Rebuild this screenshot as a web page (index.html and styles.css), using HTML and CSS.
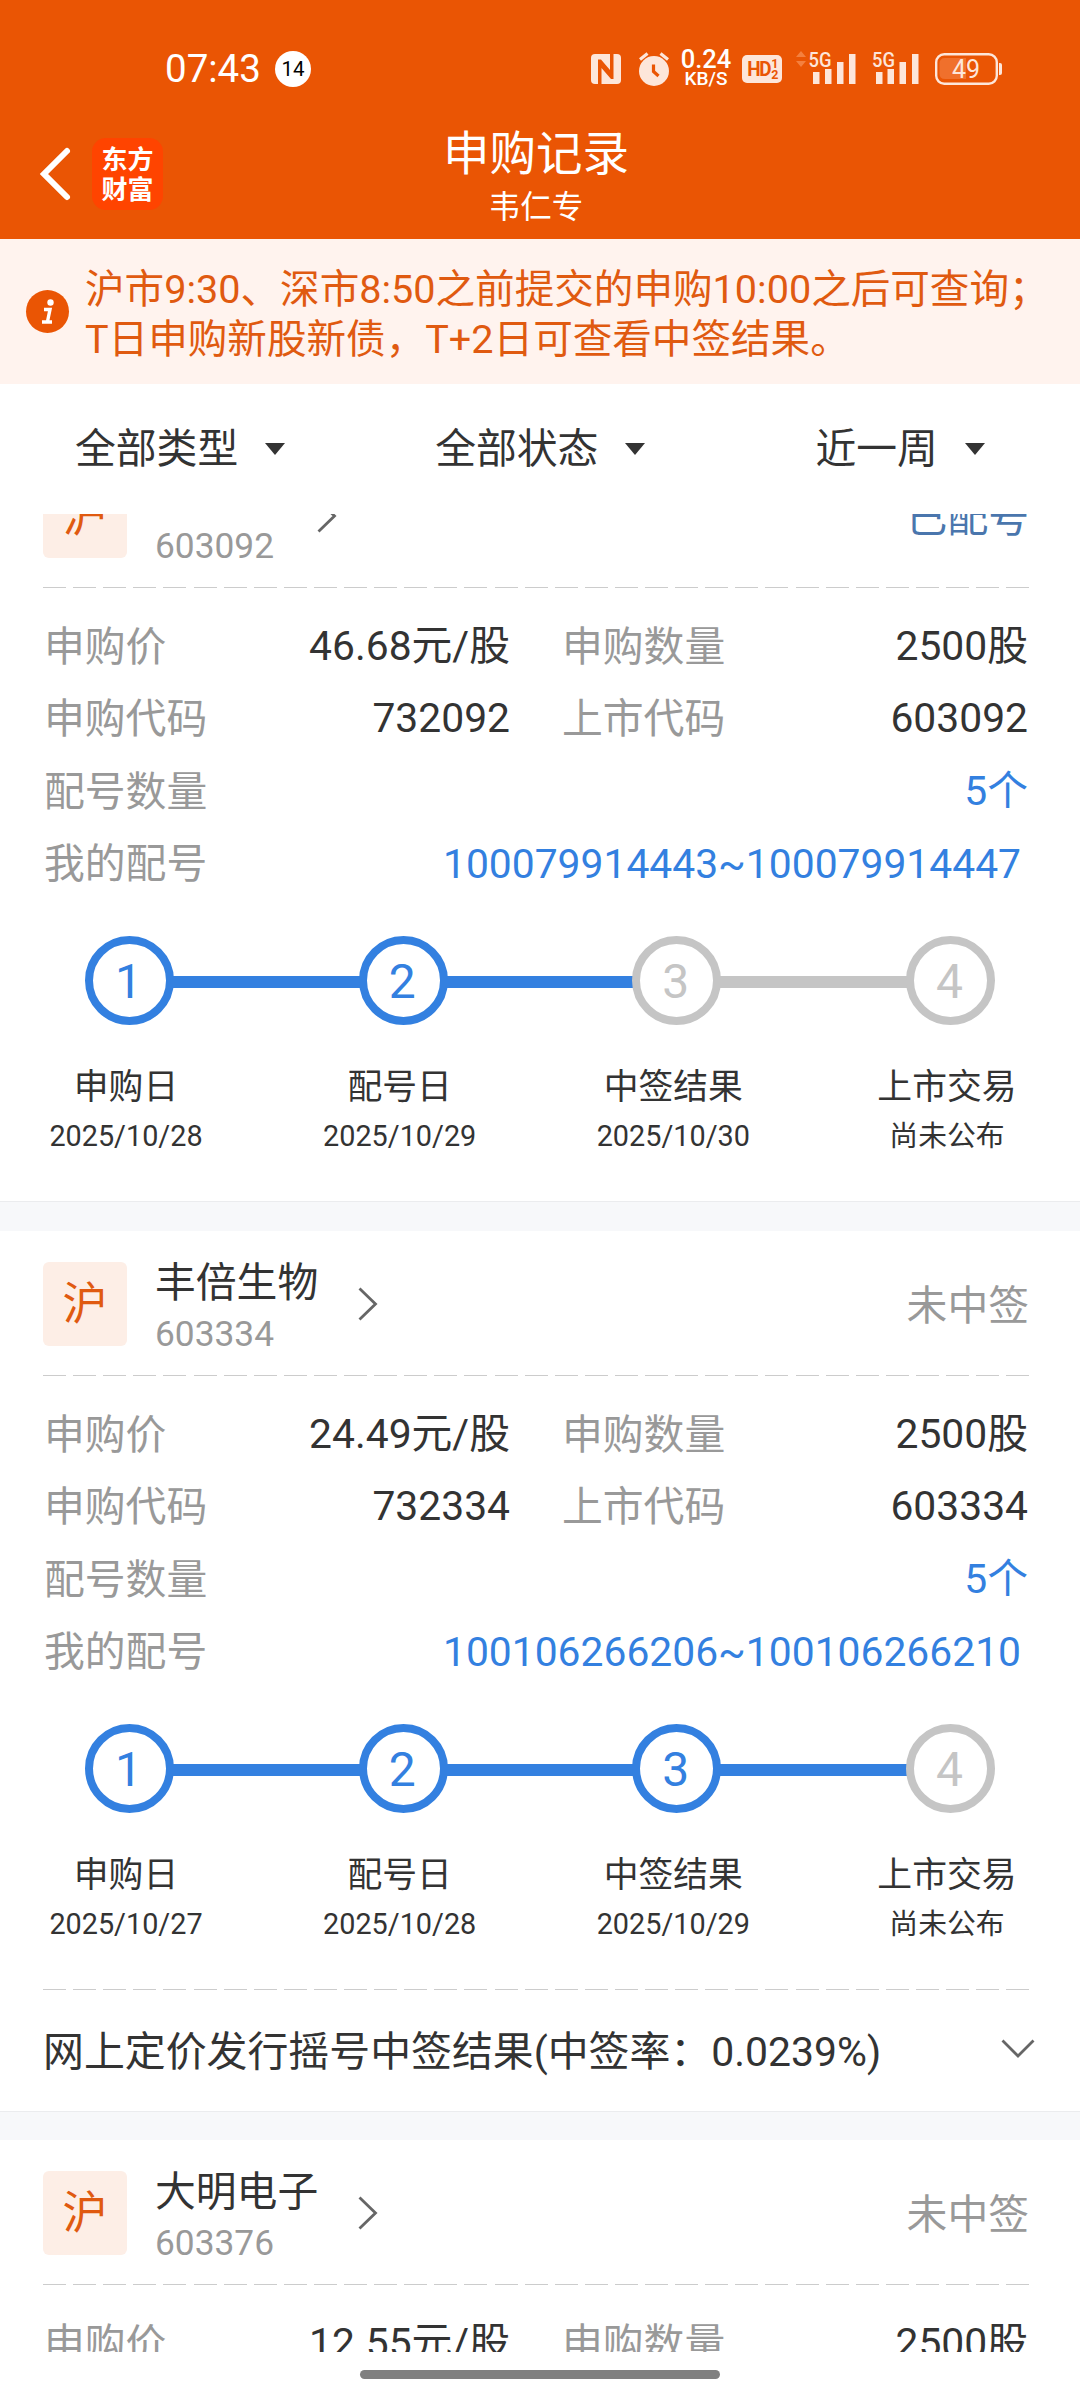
FILE: index.html
```html
<!DOCTYPE html>
<html lang="zh-CN">

<head>
    <meta charset="UTF-8">
    <meta name="viewport" content="width=device-width, initial-scale=1.0">
    <title>申购记录</title>
    <link rel="stylesheet" href="styles.css">
</head>

<body>
    <header class="header">
        <div class="status-bar">
            <span class="time">07:43</span>
            <span class="notice-count">14</span>
            <div class="status-icons">
                <svg class="icon-nfc" width="30" height="30" viewBox="0 0 30 30">
                    <rect width="30" height="30" rx="4" fill="#fde6da" />
                    <path d="M7 30V5.500H10L19 16V0H22.500V25H20L10.500 14V30Z" fill="#ea5504" />
                </svg>
                <svg class="icon-alarm" width="32" height="34" viewBox="0 0 32 34">
                    <circle cx="16" cy="19" r="15" fill="#fde6da" />
                    <path d="M2 7.500L9.500 1.500M30 7.500L22.500 1.500" stroke="#fde6da" stroke-width="3.200" />
                    <path d="M15.500 12.500V19.500L20.500 24" fill="none" stroke="#ea5504" stroke-width="3.200" />
                </svg>
                <div class="net-speed">
                    <span class="speed-value">0.24</span>
                    <span class="speed-unit">KB/S</span>
                </div>
                <div class="hd">
                    <span class="hd-text">HD</span>
                    <span class="hd-sim"><span>1</span><span>2</span></span>
                </div>
                <svg class="icon-signal-a" width="60" height="34" viewBox="0 0 60 34">
                    <path d="M0 7L5 1L10 7ZM0 11H10L5 17Z" fill="#f4803f" />
                    <text x="12.500" y="17" textLength="23" lengthAdjust="spacingAndGlyphs" class="net-type">5G</text>
                    <path d="M17 22h6.500v12H17zM29 19h6.500v15H29zM41 12h6.500v22H41zM53 4h6.500v30H53z" fill="#fde6da" />
                </svg>
                <svg class="icon-signal-b" width="47" height="34" viewBox="0 0 47 34">
                    <text x="0" y="17" textLength="23" lengthAdjust="spacingAndGlyphs" class="net-type">5G</text>
                    <path d="M4 22h6.500v12H4zM15.500 19H22v15h-6.500zM27.500 12H34v22h-6.500zM40 4h6.500v30H40z" fill="#fde6da" />
                </svg>
                <svg class="icon-battery" width="67" height="32" viewBox="0 0 67 32">
                    <rect x="1.200" y="1.200" width="60.600" height="29.600" rx="8" fill="none" stroke="#fde6da" stroke-width="2.400" />
                    <path d="M10 5H31V26H10Q4.500 26 4.500 20.500V10.500Q4.500 5 10 5Z" fill="#f0702c" />
                    <path d="M64 10h1q2 0 2 2v8q0 2-2 2h-1z" fill="#fde6da" />
                    <text x="31" y="25" text-anchor="middle" class="battery-level">49</text>
                </svg>
            </div>
        </div>
        <nav class="nav">
            <div class="nav-left">
                <svg width="30" height="54" viewBox="0 0 30 54">
                    <path d="M27 4L4 27L27 50" fill="none" stroke="#fff" stroke-width="6" stroke-linecap="round" />
                </svg>
                <div class="logo">东方<br>财富</div>
            </div>
            <div class="nav-title">
                <h1>申购记录</h1>
                <p>韦仁专</p>
            </div>
        </nav>
    </header>

    <div class="notice">
        <svg width="43" height="43" viewBox="0 0 43 43">
            <circle cx="21.500" cy="21.500" r="21.500" fill="#ea5504" />
            <circle cx="24.500" cy="12.500" r="3.200" fill="#fff" />
            <path d="M18 19.500H24L21.500 31.500M16 32H26" fill="none" stroke="#fff" stroke-width="3.400" />
        </svg>
        <p>沪市9:30、深市8:50之前提交的申购10:00之后可查询；<br>T日申购新股新债，T+2日可查看中签结果。</p>
    </div>

    <div class="filters">
        <div class="filter">全部类型<i class="caret"></i></div>
        <div class="filter">全部状态<i class="caret"></i></div>
        <div class="filter filter-last">近一周<i class="caret"></i></div>
    </div>

    <main class="list">
        <!-- first card is scrolled partly under the filters -->
        <section class="card card-scrolled">
            <div class="card-head">
                <span class="market">沪</span>
                <div class="stock">
                    <h2>德力佳</h2>
                    <span class="code">603092</span>
                </div>
                <svg class="arrow" width="20" height="34" viewBox="0 0 20 34">
                    <path d="M1.500 1.500L17.500 17L1.500 32.500" fill="none" stroke="#666" stroke-width="2.800" />
                </svg>
                <span class="state state-blue">已配号</span>
            </div>
            <div class="dash"></div>
            <div class="card-body">
                <div class="row">
                    <div class="cell"><label>申购价</label><span>46.68元/股</span></div>
                    <div class="cell"><label>申购数量</label><span>2500股</span></div>
                </div>
                <div class="row">
                    <div class="cell"><label>申购代码</label><span>732092</span></div>
                    <div class="cell"><label>上市代码</label><span>603092</span></div>
                </div>
                <div class="row blue"><label>配号数量</label><span>5个</span></div>
                <div class="row blue"><label>我的配号</label><span class="numbers">100079914443~100079914447</span></div>
                <div class="steps">
                    <span class="dot done">1</span><i class="line done"></i>
                    <span class="dot done">2</span><i class="line done"></i>
                    <span class="dot">3</span><i class="line"></i>
                    <span class="dot">4</span>
                </div>
                <div class="step-labels">
                    <div><b>申购日</b><span>2025/10/28</span></div>
                    <div><b>配号日</b><span>2025/10/29</span></div>
                    <div><b>中签结果</b><span>2025/10/30</span></div>
                    <div><b>上市交易</b><span>尚未公布</span></div>
                </div>
            </div>
        </section>

        <div class="divider"></div>

        <section class="card">
            <div class="card-head">
                <span class="market">沪</span>
                <div class="stock">
                    <h2>丰倍生物</h2>
                    <span class="code">603334</span>
                </div>
                <svg class="arrow" width="20" height="34" viewBox="0 0 20 34">
                    <path d="M1.500 1.500L17.500 17L1.500 32.500" fill="none" stroke="#666" stroke-width="2.800" />
                </svg>
                <span class="state">未中签</span>
            </div>
            <div class="dash"></div>
            <div class="card-body">
                <div class="row">
                    <div class="cell"><label>申购价</label><span>24.49元/股</span></div>
                    <div class="cell"><label>申购数量</label><span>2500股</span></div>
                </div>
                <div class="row">
                    <div class="cell"><label>申购代码</label><span>732334</span></div>
                    <div class="cell"><label>上市代码</label><span>603334</span></div>
                </div>
                <div class="row blue"><label>配号数量</label><span>5个</span></div>
                <div class="row blue"><label>我的配号</label><span class="numbers">100106266206~100106266210</span></div>
                <div class="steps">
                    <span class="dot done">1</span><i class="line done"></i>
                    <span class="dot done">2</span><i class="line done"></i>
                    <span class="dot done">3</span><i class="line done"></i>
                    <span class="dot">4</span>
                </div>
                <div class="step-labels">
                    <div><b>申购日</b><span>2025/10/27</span></div>
                    <div><b>配号日</b><span>2025/10/28</span></div>
                    <div><b>中签结果</b><span>2025/10/29</span></div>
                    <div><b>上市交易</b><span>尚未公布</span></div>
                </div>
            </div>
            <div class="dash"></div>
            <div class="result">
                <span>网上定价发行摇号中签结果(中签率：0.0239%)</span>
                <svg width="34" height="20" viewBox="0 0 34 20">
                    <path d="M1.500 1.500L17 17L32.500 1.500" fill="none" stroke="#666" stroke-width="2.800" />
                </svg>
            </div>
        </section>

        <div class="divider"></div>

        <section class="card">
            <div class="card-head">
                <span class="market">沪</span>
                <div class="stock">
                    <h2>大明电子</h2>
                    <span class="code">603376</span>
                </div>
                <svg class="arrow" width="20" height="34" viewBox="0 0 20 34">
                    <path d="M1.500 1.500L17.500 17L1.500 32.500" fill="none" stroke="#666" stroke-width="2.800" />
                </svg>
                <span class="state">未中签</span>
            </div>
            <div class="dash"></div>
            <div class="card-body">
                <div class="row">
                    <div class="cell"><label>申购价</label><span>12.55元/股</span></div>
                    <div class="cell"><label>申购数量</label><span>2500股</span></div>
                </div>
            </div>
        </section>
    </main>

    <footer class="home-bar"></footer>
</body>

</html>
```
FILE: styles.css
```css
* {
    box-sizing: border-box;
    margin: 0;
    padding: 0;
}

body {
    width: 1080px;
    height: 2400px;
    overflow: hidden;
    background-color: #fff;
    color: #333;
    font-family: Roboto, "Noto Sans CJK SC", sans-serif;
    font-size: 40.8px;
    font-weight: 400;
}

svg {
    display: block;
    flex: none;
    overflow: visible;
}

h1,
h2,
b {
    font-weight: 400;
}

/* Header */
.header {
    height: 239px;
    background-color: #ea5504;
    color: #fff;
}

.status-bar {
    display: flex;
    align-items: center;
    height: 88px;
    padding: 50px 78px 0 165px;
}

.time {
    width: 110px;
    font-size: 38.5px;
    line-height: 38px;
}

.notice-count {
    width: 36px;
    height: 36px;
    border-radius: 50%;
    background-color: #fff;
    color: #000;
    font-size: 20.5px;
    line-height: 36px;
    text-align: center;
}

.status-icons {
    display: flex;
    align-items: center;
    margin-left: auto;
}

.icon-alarm {
    margin-left: 17px;
}

.net-speed {
    display: flex;
    flex-direction: column;
    align-items: center;
    width: 52px;
    height: 40px;
    margin-left: 10px;
    font-weight: 500;
}

.speed-value {
    font-size: 25.5px;
    line-height: 20px;
}

.speed-unit {
    font-size: 19px;
    line-height: 20px;
}

.hd {
    display: flex;
    align-items: center;
    justify-content: center;
    width: 40px;
    height: 28px;
    margin-left: 10px;
    border-radius: 5px;
    background-color: #fde6da;
    color: #ea5504;
    font-weight: 700;
}

.hd-text {
    font-size: 21px;
    line-height: 28px;
    letter-spacing: -1.5px;
    transform: scaleX(0.9);
}

.hd-sim {
    display: flex;
    flex-direction: column;
    font-size: 12.5px;
    line-height: 11px;
}

.icon-signal-a {
    margin-left: 14px;
    margin-top: -4px;
}

.icon-signal-b {
    margin-left: 16px;
    margin-top: -4px;
}

.icon-battery {
    margin-left: 16px;
}

.net-type {
    fill: #fde6da;
    font-size: 21px;
    font-weight: 500;
}

.battery-level {
    fill: #fde6da;
    font-size: 25px;
}

.nav {
    display: grid;
    grid-template-columns: 200px 672px;
    height: 151px;
}

.nav-left {
    display: flex;
    align-items: center;
    gap: 22px;
    padding: 20px 0 0 40px;
}

.logo {
    width: 71px;
    height: 72px;
    padding-top: 7px;
    border-radius: 14px;
    background-color: #ff4400;
    font-size: 26px;
    font-weight: 700;
    line-height: 30px;
    text-align: center;
}

.nav-title {
    padding-top: 36px;
    text-align: center;
}

.nav-title h1 {
    font-size: 46.5px;
    line-height: 60px;
}

.nav-title p {
    font-size: 31.5px;
    line-height: 48px;
}

/* Notice */
.notice {
    display: flex;
    align-items: center;
    gap: 16px;
    height: 145px;
    padding: 0 0 0 26px;
    background-color: #fff3ee;
    color: #e05a10;
    font-size: 39.6px;
    line-height: 50px;
    white-space: nowrap;
}

.notice p {
    margin-top: 6px;
}

/* Filters */
.filters {
    display: flex;
    gap: 150px;
    height: 130px;
    padding-left: 75px;
    line-height: 139px;
}

.filter {
    display: flex;
    align-items: center;
}

.filter-last {
    margin-left: 20px;
}

.caret {
    margin-left: 27px;
    border-top: 12px solid #333;
    border-left: 10px solid transparent;
    border-right: 10px solid transparent;
}

/* List */
.list {
    height: 1838px;
    overflow: hidden;
}

.card-scrolled {
    margin-top: -71px;
}

.card-head {
    display: flex;
    align-items: center;
    height: 144px;
    padding: 0 51px 0 43px;
}

.market {
    width: 84px;
    height: 84px;
    margin-top: 1px;
    border-radius: 6px;
    background-color: #fdeee6;
    color: #e05a10;
    font-size: 45px;
    line-height: 86px;
    text-align: center;
}

.stock {
    margin: 7px 0 0 28px;
}

.stock h2 {
    font-size: 40.8px;
    line-height: 54px;
}

.code {
    display: block;
    color: #999;
    font-size: 35.3px;
    line-height: 48px;
}

.arrow {
    margin: 1px 0 0 40px;
}

.state {
    margin-left: auto;
    margin-top: -2px;
    color: #999;
}

.state-blue {
    color: #4a76ad;
}

.dash {
    height: 1px;
    margin: 0 51px 0 43px;
    background: repeating-linear-gradient(to right, #ccc 0, #ccc 23px, transparent 23px, transparent 30.1px);
}

.card-body {
    height: 613px;
    padding: 22px 52px 0 44px;
}

.row {
    display: flex;
    justify-content: space-between;
    height: 72.4px;
    line-height: 73px;
}

.cell {
    display: flex;
    justify-content: space-between;
    width: 466px;
}

label {
    padding-top: 1px;
    color: #999;
}

.blue span {
    color: #3380e0;
}

.numbers {
    padding: 1px 7px 0 0;
}

/* Progress */
.steps {
    display: flex;
    align-items: center;
    margin-top: 36px;
    padding: 0 33px 0 41px;
}

.dot {
    flex: none;
    width: 89px;
    height: 89px;
    padding-right: 2px;
    border: 8.5px solid #c5c5c5;
    border-radius: 50%;
    color: #c5c5c5;
    font-size: 48px;
    line-height: 76px;
    text-align: center;
}

.dot.done {
    border-color: #3380e0;
    color: #3380e0;
}

.line {
    flex: 1;
    height: 12px;
    margin: 3px -2px 0;
    background-color: #c5c5c5;
}

.line.done {
    background-color: #3380e0;
}

.step-labels {
    display: flex;
    justify-content: space-between;
    margin: 37px -2px 0 -1px;
}

.step-labels div {
    width: 166px;
    text-align: center;
}

.step-labels b {
    display: block;
    font-size: 34.8px;
    line-height: 51px;
}

.step-labels span {
    display: block;
    font-size: 28.8px;
    line-height: 47px;
}

.result {
    display: flex;
    align-items: center;
    justify-content: space-between;
    height: 121px;
    padding: 0 45px 4px 43px;
    font-size: 40.9px;
}

.divider {
    height: 30px;
    border-top: 1px solid #ebecee;
    background-color: #f7f8fa;
}

.card:not(.card-scrolled) + .divider {
    height: 29px;
}

.home-bar {
    width: 360px;
    height: 9px;
    margin: 18px auto 0;
    border-radius: 5px;
    background-color: #808080;
}
```
